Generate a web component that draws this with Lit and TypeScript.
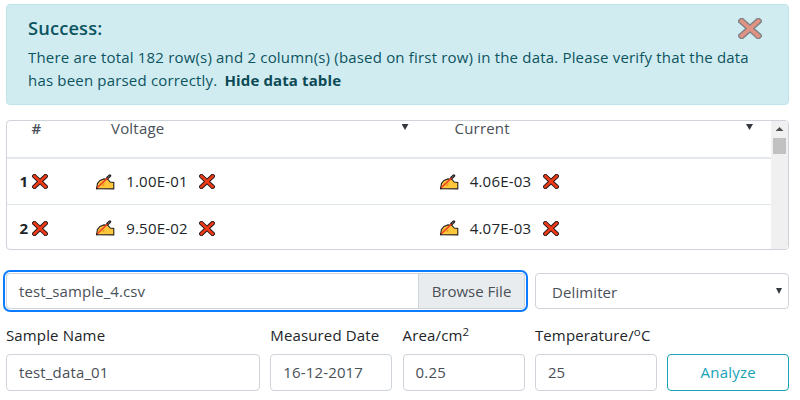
import { LitElement, html, css, svg } from "lit";
import { customElement, property } from "lit/decorators.js";

@customElement("cross-icon")
class CrossIcon extends LitElement {
  static styles = css`
    :host { display: block; flex: none; width: 16px; height: 15px; }
    svg { display: block; width: 100%; height: 100%; }
    .edge { stroke: #24191a; stroke-width: 4.6; }
    .fill { stroke: #f03a17; stroke-width: 2.7; }
  `;
  render() {
    return html`<svg viewBox="0 0 16 15" preserveAspectRatio="none" fill="none" stroke-linecap="square">
      ${["edge", "fill"].map((c) => svg`<path class=${c} d="M2.5 2.3L13.5 12.7M13.5 2.3L2.5 12.7"></path>`)}
    </svg>`;
  }
}

@customElement("write-icon")
class WriteIcon extends LitElement {
  static styles = css`
    :host { display: block; flex: none; width: 20px; height: 16px; }
    svg { display: block; width: 100%; height: 100%; }
  `;
  render() {
    return html`<svg viewBox="0 0 20 16">
      <path d="M1.6 14.8L2.4 9.6L5 6.4L9 4.9L12.8 5.2L15.2 8L18.8 8.4V14.9Z" fill="#fec63b" stroke="#272020" stroke-width="1.1"></path>
      <path d="M6.4 11.4L9.6 9L9.2 12Z" fill="#f29a1f"></path>
      <path d="M12.6 3.9L14.8 1.8" stroke="#272020" stroke-width="2.9" stroke-linecap="round"></path>
      <path d="M12.8 3.7L14.5 2.1" stroke="#8d8d8d" stroke-width="1"></path>
      <path d="M2.2 13.8L12.4 4.1" stroke="#ee3d22" stroke-width="1.5"></path>
      <path d="M.8 15.3L1.5 12.9L3.4 14.9Z" fill="#272020"></path>
    </svg>`;
  }
}

@customElement("form-field")
class FormField extends LitElement {
  @property() label = "";
  @property() sup = "";
  @property() tail = "";
  @property() value = "";
  static styles = css`
    :host { display: block; }
    .label { height: 28px; line-height: 25px; color: #212529; white-space: nowrap; letter-spacing: .14px; }
    .sup { font-size: 11.5px; line-height: 0; position: relative; top: -5px; }
    .box { height: 37px; line-height: 35px; margin-top: 3px; padding-left: 12px; box-sizing: border-box;
      border: 1px solid #ced4da; border-radius: 4px; color: #495057; background: #fff; letter-spacing: .15px; }
  `;
  render() {
    return html`<div class="label">${this.label}<span class="sup">${this.sup}</span>${this.tail}</div>
      <div class="box">${this.value}</div>`;
  }
}

@customElement("app-root")
class AppRoot extends LitElement {
  static styles = css`
    :host { display: block; width: 800px; height: 400px; overflow: hidden; box-sizing: border-box;
      padding: 4px 11px 0 6px; background: #fff; color: #212529;
      font: 15px/23px "Open Sans", "Noto Sans", sans-serif; }
    .alert { height: 101px; box-sizing: border-box; border: 1px solid #bee5eb; border-radius: 4px;
      background: #d1ecf1; color: #0c5460; padding: 11px 20px 0 21px; display: flex; flex-direction: column; }
    .alert-top { display: flex; justify-content: space-between; height: 30px; }
    .title { font-size: 18.3px; font-weight: 600; line-height: 24px; letter-spacing: .15px; }
    .close { width: 24px; height: 21px; margin: 2px 6px 0 0; opacity: .5; }
    .line { white-space: nowrap; letter-spacing: .183px; }
    .link { font-weight: 700; color: #0b4a55; margin-left: 3px; letter-spacing: .12px; }
    .table { height: 130px; margin-top: 15px; box-sizing: border-box; border: 1px solid #ced4da;
      border-radius: 4px; display: flex; overflow: clip; }
    .grid { flex: 1; min-width: 0; }
    .row { display: grid; grid-template-columns: 78px 343.5px 1fr; height: 46px; box-sizing: border-box;
      align-items: center; border-bottom: 1px solid #dee6ea; }
    .row:last-child { border-bottom: 0; }
    .head { height: 38px; border-bottom: 2px solid #e4e8ec; align-items: start; color: #495057; line-height: 15px; letter-spacing: .2px; }
    .hash { padding-left: 24.5px; font-weight: 600; }
    .th { display: flex; justify-content: space-between; padding: 0 18px 0 26px; }
    .th:nth-child(2) { padding-right: 20px; }
    .num { display: flex; align-items: center; justify-content: flex-end; gap: 4px; font-weight: 700; padding-right: 37px; }
    .cell { display: flex; align-items: center; padding-left: 10px; }
    .val { width: 64px; margin: 0 10px 0 10px; text-align: center; letter-spacing: .2px; }
    .caret { flex: none; width: 7px; height: 6px; background: #343a40; clip-path: polygon(0 0, 100% 0, 50% 100%); margin-top: 3px; }
    .scroll { width: 17px; background: #f0f0f0; display: flex; flex-direction: column; align-items: center; }
    .up { width: 8px; height: 4px; margin-top: 6px; background: #505050; clip-path: polygon(50% 0, 100% 100%, 0 100%); }
    .thumb { width: 13px; height: 16px; margin-top: 7px; background: #c1c1c1; }
    .picker { display: grid; grid-template-columns: 519px 254px; gap: 10px; margin-top: 23px; color: #495057; line-height: 34px; }
    .file, .select { height: 36px; box-sizing: border-box; border: 1px solid #ced4da; border-radius: 4px; display: flex; }
    .file { box-shadow: 0 0 0 1px #fff, 0 0 0 3px #0b7cff; }
    .name { flex: 1; padding-left: 12px; letter-spacing: .1px; }
    .browse { width: 106px; box-sizing: border-box; border-left: 1px solid #ced4da; background: #e9ecef; text-align: center; border-radius: 0 3px 3px 0; }
    .select { justify-content: space-between; padding: 0 6px 0 16px; line-height: 36px; letter-spacing: .1px; }
    .select .caret { height: 6px; width: 6px; margin-top: 14px; }
    .form { display: grid; grid-template-columns: 254px 122px 122px 122px 122px; column-gap: 10.3px; margin-top: 14px; }
    .analyze { align-self: end; height: 37px; line-height: 35px; box-sizing: border-box; border: 1px solid #17a2b8;
      border-radius: 4px; color: #17a2b8; text-align: center; letter-spacing: .2px; }
  `;

  rows = [
    ["1", "1.00E-01", "4.06E-03"],
    ["2", "9.50E-02", "4.07E-03"],
  ];

  cell(v: string) {
    return html`<div class="cell"><write-icon></write-icon><span class="val">${v}</span><cross-icon></cross-icon></div>`;
  }

  render() {
    return html`
      <div class="alert">
        <div class="alert-top"><span class="title">Success:</span><cross-icon class="close"></cross-icon></div>
        <div class="line">There are total 182 row(s) and 2 column(s) (based on first row) in the data. Please verify that the data</div>
        <div class="line">has been parsed correctly. <span class="link">Hide data table</span></div>
      </div>
      <div class="table">
        <div class="grid">
          <div class="row head">
            <span class="hash">#</span>
            <div class="th"><span>Voltage</span><i class="caret"></i></div>
            <div class="th"><span>Current</span><i class="caret"></i></div>
          </div>
          ${this.rows.map(([n, a, b]) => html`<div class="row">
            <div class="num"><span>${n}</span><cross-icon></cross-icon></div>
            ${this.cell(a)}${this.cell(b)}
          </div>`)}
        </div>
        <div class="scroll"><i class="up"></i><i class="thumb"></i></div>
      </div>
      <div class="picker">
        <div class="file"><span class="name">test_sample_4.csv</span><span class="browse">Browse File</span></div>
        <div class="select"><span>Delimiter</span><i class="caret"></i></div>
      </div>
      <div class="form">
        <form-field label="Sample Name" value="test_data_01"></form-field>
        <form-field label="Measured Date" value="16-12-2017"></form-field>
        <form-field label="Area/cm" sup="2" value="0.25"></form-field>
        <form-field label="Temperature/" sup="o" tail="C" value="25"></form-field>
        <div class="analyze">Analyze</div>
      </div>`;
  }
}
